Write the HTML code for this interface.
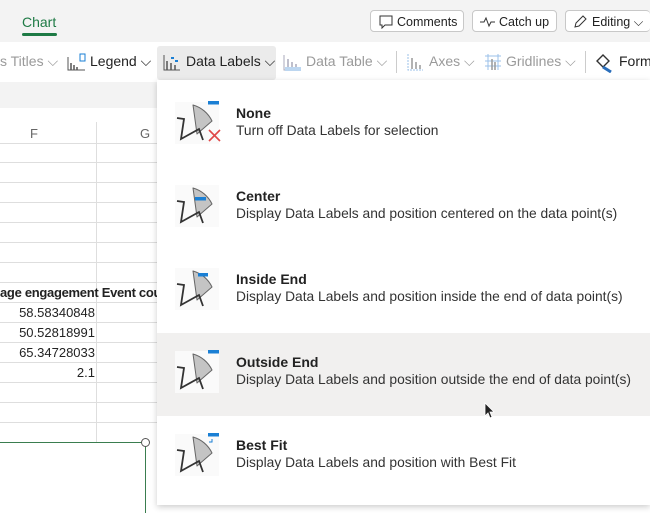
<!DOCTYPE html>
<html><head><style>
body{margin:0;width:650px;height:510px;overflow:hidden;font-family:"Liberation Sans",sans-serif;background:#fff;position:relative}
.top{position:absolute;left:0;top:0;width:650px;height:42px;background:#f3f3f3}
.tab{position:absolute;left:22px;top:14px;color:#1e7a45;font-size:14px}
.tabu{position:absolute;left:22px;top:33px;width:35px;height:3px;background:#1e7a45;border-radius:2px}
.btn{position:absolute;top:10px;height:22px;border:1px solid #c8c8c8;border-radius:4px;background:#fff;font-size:12.5px;line-height:22px;color:#222;box-sizing:border-box;padding-left:26px}
.tb{position:absolute;top:42px;left:0;width:650px;height:38px;background:#fff;font-size:14px}
.tb span{position:absolute;top:11px}
.tb svg{position:absolute;top:11px}
.dis{color:#9a9a9a}
.grid{position:absolute;left:0;top:82px;width:157px;height:428px;background:#fff}
.hl{position:absolute;left:0;width:157px;height:1px;background:#dedede}
.menu{position:absolute;left:157px;top:80px;width:493px;height:425px;background:#fff;box-shadow:0 2px 6px rgba(0,0,0,.2)}
.it{position:absolute;left:0;width:493px;height:83px}
.it b{position:absolute;left:79px;top:21px;font-size:14px;color:#222}
.it i{position:absolute;left:79px;top:39px;font-style:normal;font-size:13.8px;color:#333}
.it svg{position:absolute;left:15px;top:14px}
.num{position:absolute;right:62px;font-size:13px;color:#222}
</style></head><body>
<div class="top"><div class="tab">Chart</div><div class="tabu"></div>
<div class="btn" style="left:370px;width:94px">Comments<svg style="position:absolute;left:8px;top:4px" width="14" height="14"><path d="M1 1h12v9H6l-3 3v-3H1z" fill="none" stroke="#333"/></svg></div>
<div class="btn" style="left:472px;width:85px">Catch up<svg style="position:absolute;left:6px;top:5px" width="18" height="12"><path d="M1 6h4l2-4 3 8 2-4h4" fill="none" stroke="#333"/></svg></div>
<div class="btn" style="left:565px;width:85px;border-right:none">Editing ⌵<svg style="position:absolute;left:7px;top:4px" width="14" height="14"><path d="M2 12l1-4 7-7 3 3-7 7z" fill="none" stroke="#333"/></svg></div>
</div>
<div class="tb">
<span class="dis" style="left:0">s Titles ⌵</span>
<svg style="left:67px" width="20" height="18"><path d="M1 4v13h17" fill="none" stroke="#555"/><path d="M4 10v7M7 12v5M10 14v3" stroke="#555" stroke-width="1.5"/><rect x="13" y="1" width="5" height="7" fill="#fff" stroke="#1a7fd4"/></svg>
<span style="left:90px;color:#222">Legend ⌵</span>
<div style="position:absolute;left:157px;top:4px;width:119px;height:34px;background:#ebebeb;border-radius:3px"></div>
<svg style="left:163px" width="18" height="18"><path d="M1 2v15h16" fill="none" stroke="#555"/><path d="M4 8v9M8 10v7M12 12v5" stroke="#555" stroke-width="1.5"/><path d="M8 5h3M12 8h3" stroke="#1a7fd4" stroke-width="2"/></svg>
<span style="left:186px;color:#222">Data Labels ⌵</span>
<svg style="left:283px" width="20" height="18"><path d="M1 2v15h17" fill="none" stroke="#aab"/><path d="M5 6v8M9 9v5M13 11v3" stroke="#aab" stroke-width="1.5"/><rect x="2" y="14" width="16" height="4" fill="#bcd6f0"/></svg>
<span class="dis" style="left:306px">Data Table ⌵</span>
<div style="position:absolute;left:396px;top:9px;width:1px;height:22px;background:#ccc"></div>
<svg style="left:406px" width="18" height="18"><path d="M2 1v16h15" fill="none" stroke="#9bc1ea" stroke-dasharray="2 1"/><path d="M6 5v11M10 9v7M14 12v4" stroke="#999" stroke-width="1.5"/></svg>
<span class="dis" style="left:429px">Axes ⌵</span>
<svg style="left:484px" width="18" height="18"><path d="M1 3h16M1 8h16M1 13h16M4 1v16M14 1v16" stroke="#9bc1ea"/><path d="M8 6v11M11 9v8" stroke="#999" stroke-width="1.5"/></svg>
<span class="dis" style="left:506px">Gridlines ⌵</span>
<div style="position:absolute;left:585px;top:9px;width:1px;height:22px;background:#ccc"></div>
<svg style="left:594px" width="20" height="20"><path d="M3 8l6-6 6 6-6 6z" fill="none" stroke="#333" stroke-width="1.4"/><path d="M9 14l8 5" stroke="#2a6ebb" stroke-width="3"/></svg>
<span style="left:619px;color:#222">Form</span>
</div>
<div class="grid">
<div style="position:absolute;left:0;top:0;width:157px;height:26px;background:#f3f3f3"></div>
<div style="position:absolute;left:30px;top:44px;font-size:13px;color:#666">F</div>
<div style="position:absolute;left:140px;top:44px;font-size:13px;color:#666">G</div>
<div style="position:absolute;left:96px;top:40px;width:1px;height:320px;background:#dedede"></div>
<div class="hl" style="top:61px"></div><div class="hl" style="top:80px"></div><div class="hl" style="top:100px"></div><div class="hl" style="top:120px"></div><div class="hl" style="top:140px"></div><div class="hl" style="top:160px"></div><div class="hl" style="top:180px"></div><div class="hl" style="top:200px"></div><div class="hl" style="top:220px"></div><div class="hl" style="top:240px"></div><div class="hl" style="top:260px"></div><div class="hl" style="top:280px"></div><div class="hl" style="top:300px"></div><div class="hl" style="top:320px"></div><div class="hl" style="top:340px"></div>
<div style="position:absolute;left:0;top:203px;font-size:13px;font-weight:bold;color:#222;white-space:nowrap;letter-spacing:-.3px">age engagement Event cou</div>
<div class="num" style="top:223px">58.58340848</div>
<div class="num" style="top:243px">50.52818991</div>
<div class="num" style="top:263px">65.34728033</div>
<div class="num" style="top:283px">2.1</div>
<div style="position:absolute;left:0;top:360px;width:145px;height:70px;border-top:1px solid #3a7d4f;border-right:1px solid #3a7d4f"></div>
<div style="position:absolute;left:141px;top:356px;width:7px;height:7px;border:1px solid #555;border-radius:50%;background:#fff"></div>
</div>
<div class="menu">
<div class="it" style="top:4px"><svg width="52" height="48"><rect x="3" y="4" width="44" height="42" fill="#fafafa"/><path d="M25 36L21 7A30 30 0 0 1 40 23Z" fill="#c4c4c4" stroke="#666" stroke-linejoin="round"/><path d="M5 20L12 21L9 41L27 31L31 42" fill="none" stroke="#333" stroke-width="1.8"/><rect x="36" y="3" width="11" height="3.5" fill="#1a7fd4"/><path d="M37 32l11 11M48 32L37 43" stroke="#e04848" stroke-width="1.6"/></svg><b>None</b><i>Turn off Data Labels for selection</i></div>
<div class="it" style="top:87px"><svg width="52" height="48"><rect x="3" y="4" width="44" height="42" fill="#fafafa"/><path d="M25 36L21 7A30 30 0 0 1 40 23Z" fill="#c4c4c4" stroke="#666" stroke-linejoin="round"/><path d="M5 20L12 21L9 41L27 31L31 42" fill="none" stroke="#333" stroke-width="1.8"/><rect x="23" y="16" width="11" height="3.5" fill="#1a7fd4"/></svg><b>Center</b><i>Display Data Labels and position centered on the data point(s)</i></div>
<div class="it" style="top:170px"><svg width="52" height="48"><rect x="3" y="4" width="44" height="42" fill="#fafafa"/><path d="M25 36L21 7A30 30 0 0 1 40 23Z" fill="#c4c4c4" stroke="#666" stroke-linejoin="round"/><path d="M5 20L12 21L9 41L27 31L31 42" fill="none" stroke="#333" stroke-width="1.8"/><rect x="26" y="9" width="10" height="3.5" fill="#1a7fd4"/></svg><b>Inside End</b><i>Display Data Labels and position inside the end of data point(s)</i></div>
<div class="it" style="top:253px;background:#f1f0ef"><svg width="52" height="48"><rect x="3" y="4" width="44" height="42" fill="#fafafa"/><path d="M25 36L21 7A30 30 0 0 1 40 23Z" fill="#c4c4c4" stroke="#666" stroke-linejoin="round"/><path d="M5 20L12 21L9 41L27 31L31 42" fill="none" stroke="#333" stroke-width="1.8"/><rect x="36" y="3" width="11" height="3.5" fill="#1a7fd4"/></svg><b>Outside End</b><i>Display Data Labels and position outside the end of data point(s)</i></div>
<div class="it" style="top:336px"><svg width="52" height="48"><rect x="3" y="4" width="44" height="42" fill="#fafafa"/><path d="M25 36L21 7A30 30 0 0 1 40 23Z" fill="#c4c4c4" stroke="#666" stroke-linejoin="round"/><path d="M5 20L12 21L9 41L27 31L31 42" fill="none" stroke="#333" stroke-width="1.8"/><rect x="36" y="3" width="11" height="3.5" fill="#1a7fd4"/><path d="M37 12h3v-3" fill="none" stroke="#1a7fd4"/></svg><b>Best Fit</b><i>Display Data Labels and position with Best Fit</i></div>
</div>
<svg style="position:absolute;left:484px;top:402px" width="12" height="18"><path d="M1 1v13l3-3 2 5 2-1-2-5h4z" fill="#222" stroke="#fff" stroke-width=".8"/></svg>
</body></html>
